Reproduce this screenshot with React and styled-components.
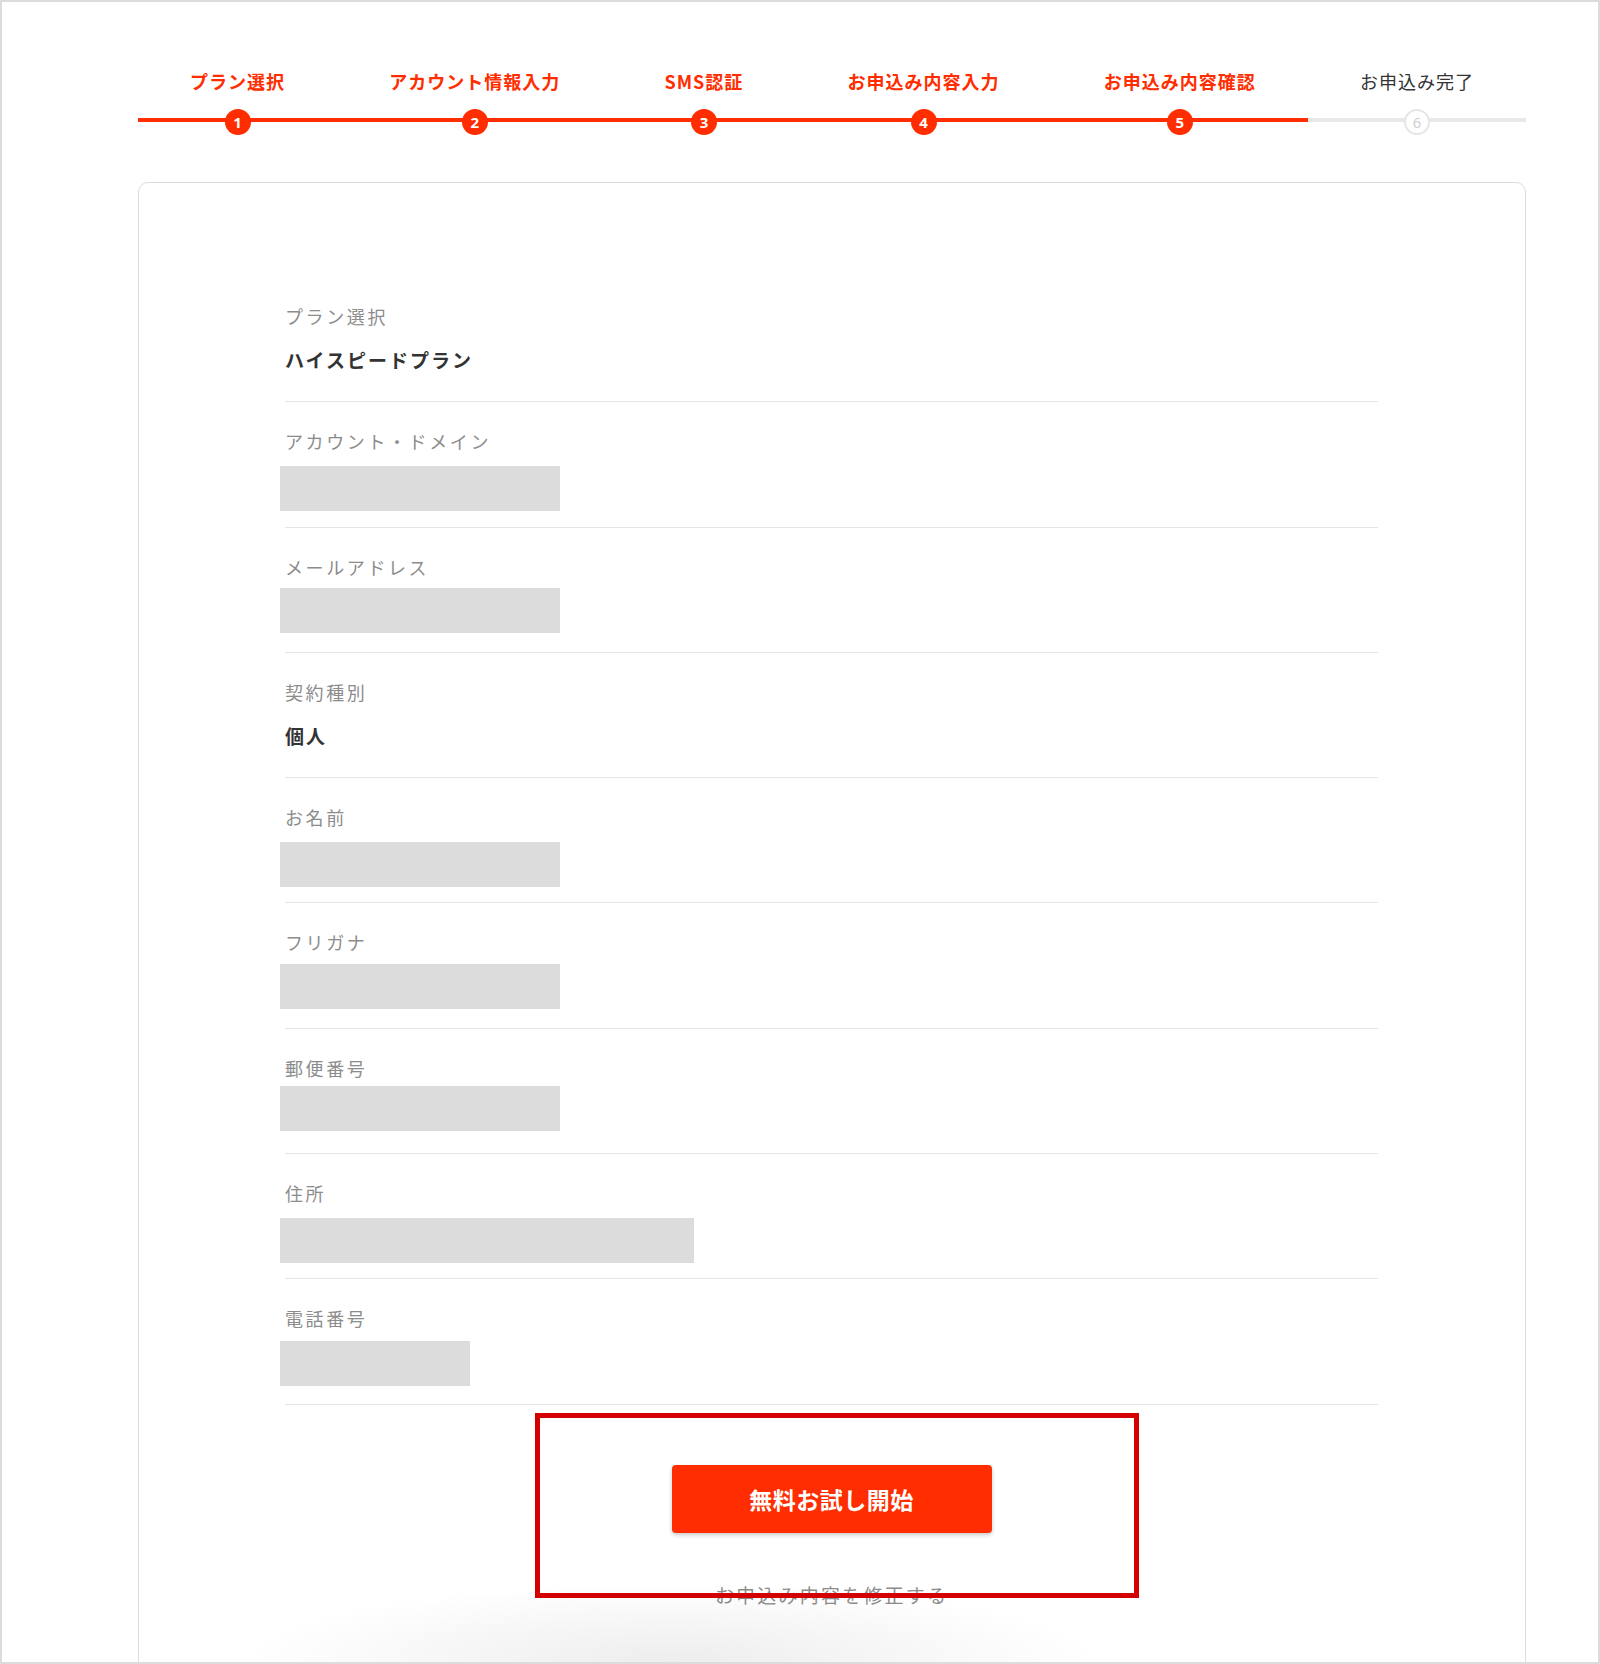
import React from "react";
import styled, { createGlobalStyle } from "styled-components";

const RED = "#ff2d00";

const GlobalStyle = createGlobalStyle`
  html, body { margin: 0; padding: 0; background: #fff; }
  body {
    font-family: "Noto Sans CJK JP", "Noto Sans", "Liberation Sans", sans-serif;
    color: #333;
  }
  * { box-sizing: border-box; }
`;

const Page = styled.div`
  position: relative;
  width: 1600px;
  height: 1664px;
  border: 2px solid #dcdcdc;
  overflow: hidden;
  padding: 67px 72px 0 136px;
  background: #fff;
`;

const Stepper = styled.ol`
  display: flex;
  list-style: none;
  margin: 0;
  padding: 0;
`;

const Step = styled.li`
  flex: 1 1 auto;
  display: flex;
  flex-direction: column;
  align-items: center;
  gap: 16px;
`;

const StepLabel = styled.span`
  font-size: 18px;
  line-height: 24px;
  letter-spacing: 1px;
  white-space: nowrap;
  font-weight: ${(p) => (p.$done ? 700 : 400)};
  color: ${(p) => (p.$done ? RED : "#333")};
`;

const Track = styled.div`
  align-self: stretch;
  height: 26px;
  display: flex;
  justify-content: center;
  align-items: center;
  background: linear-gradient(${(p) => (p.$done ? RED : "#e8e8e8")}, ${(p) => (p.$done ? RED : "#e8e8e8")})
    0 9px / 100% 4px no-repeat;
`;

const Dot = styled.span`
  width: 26px;
  height: 26px;
  border-radius: 50%;
  display: flex;
  align-items: center;
  justify-content: center;
  font-family: "Noto Sans", "Liberation Sans", sans-serif;
  font-size: 15px;
  line-height: 1;
  font-weight: ${(p) => (p.$done ? 700 : 400)};
  background: ${(p) => (p.$done ? RED : "#fff")};
  color: ${(p) => (p.$done ? "#fff" : "#cfcfcf")};
  border: ${(p) => (p.$done ? "none" : "2px solid #e6e6e6")};
`;

const Card = styled.section`
  margin-top: 47px;
  border: 1px solid #dcdcdc;
  border-radius: 10px;
  padding: 94px 147px 120px 146px;
`;

const Row = styled.div`
  padding: 28px 0 15.3px;
  border-bottom: 1px solid #e6e6e6;
`;

const Label = styled.div`
  font-size: 18px;
  line-height: 22px;
  letter-spacing: 2.6px;
  color: #8c8c8c;
`;

const Value = styled.div`
  margin-top: 14px;
  height: 45px;
  font-size: 19px;
  line-height: 38px;
  font-weight: 700;
  letter-spacing: 2px;
  color: #333;
`;

const Redacted = styled.div`
  margin-top: ${(p) => 14 + (p.$shift || 0)}px;
  margin-bottom: ${(p) => -(p.$shift || 0)}px;
  margin-left: -5px;
  height: 45px;
  width: ${(p) => p.$w}px;
  background: #dcdcdc;
`;

const Actions = styled.div`
  position: relative;
  display: flex;
  flex-direction: column;
  align-items: center;
  padding-top: 60px;
`;

const StartButton = styled.button`
  width: 320px;
  height: 68px;
  border: none;
  border-radius: 4px;
  background: ${RED};
  color: #fff;
  font-family: inherit;
  font-size: 23px;
  font-weight: 700;
  letter-spacing: 0.5px;
  box-shadow: 0 2px 4px rgba(0, 0, 0, 0.22);
  cursor: pointer;
`;

const EditLink = styled.a`
  margin-top: 50px;
  font-size: 19px;
  line-height: 24px;
  letter-spacing: 2.2px;
  color: #8c8c8c;
  text-decoration: none;
`;

const Highlight = styled.div`
  position: absolute;
  top: 8px;
  left: 50%;
  margin-left: -297px;
  width: 604px;
  height: 185px;
  border: 5px solid #d40000;
  pointer-events: none;
`;

const BottomShade = styled.div`
  position: absolute;
  left: 220px;
  bottom: 0;
  width: 900px;
  height: 80px;
  pointer-events: none;
  background: radial-gradient(ellipse 48% 100% at 50% 100%, rgba(0, 0, 0, 0.07), rgba(0, 0, 0, 0) 100%);
`;

const steps = [
  { label: "プラン選択", done: true },
  { label: "アカウント情報入力", done: true },
  { label: "SMS認証", done: true },
  { label: "お申込み内容入力", done: true },
  { label: "お申込み内容確認", done: true },
  { label: "お申込み完了", done: false },
];

const rows = [
  { label: "プラン選択", value: "ハイスピードプラン" },
  { label: "アカウント・ドメイン", redacted: 280 },
  { label: "メールアドレス", redacted: 280, shift: -4 },
  { label: "契約種別", value: "個人" },
  { label: "お名前", redacted: 280 },
  { label: "フリガナ", redacted: 280, shift: -3 },
  { label: "郵便番号", redacted: 280, shift: -7 },
  { label: "住所", redacted: 414 },
  { label: "電話番号", redacted: 190, shift: -2 },
];

export default function App() {
  return (
    <>
      <GlobalStyle />
      <Page>
        <Stepper>
          {steps.map((s, i) => (
            <Step key={s.label}>
              <StepLabel $done={s.done}>{s.label}</StepLabel>
              <Track $done={s.done}>
                <Dot $done={s.done}>{i + 1}</Dot>
              </Track>
            </Step>
          ))}
        </Stepper>
        <Card>
          {rows.map((r) => (
            <Row key={r.label}>
              <Label>{r.label}</Label>
              {r.value ? (
                <Value>{r.value}</Value>
              ) : (
                <Redacted $w={r.redacted} $shift={r.shift} />
              )}
            </Row>
          ))}
          <Actions>
            <StartButton>無料お試し開始</StartButton>
            <EditLink href="#">お申込み内容を修正する</EditLink>
            <Highlight />
          </Actions>
        </Card>
        <BottomShade />
      </Page>
    </>
  );
}
